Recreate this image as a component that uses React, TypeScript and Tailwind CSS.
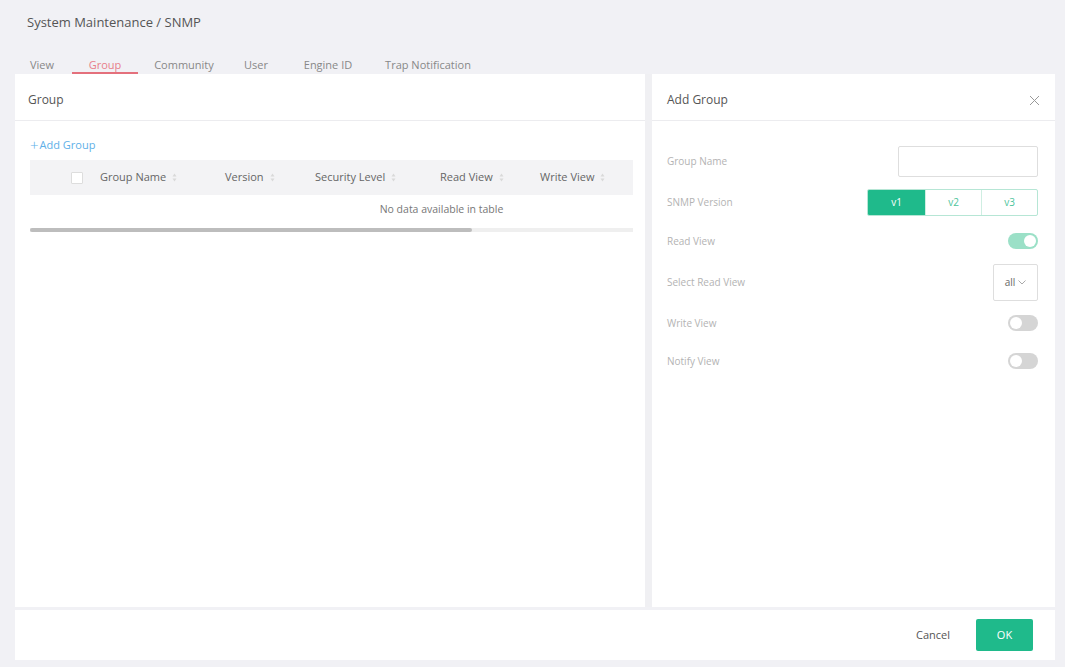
import React from "react";

const SortIcon = () => (
  <svg width="5" height="9" viewBox="0 0 5 9" className="ml-[6px]">
    <path d="M2.5 0.5 L4.5 3.5 L0.5 3.5 Z" fill="#d9d9d9" />
    <path d="M2.5 8.5 L4.5 5.5 L0.5 5.5 Z" fill="#d9d9d9" />
  </svg>
);

const Toggle = ({ on }: { on: boolean }) => (
  <div
    className={
      on
        ? "w-[30px] h-[16px] rounded-full bg-[#9be0c7] flex items-center justify-end pr-[2px]"
        : "w-[30px] h-[16px] rounded-full bg-[#d5d5d5] flex items-center justify-start pl-[2px]"
    }
  >
    <div className="w-[12px] h-[12px] rounded-full bg-white" />
  </div>
);

export default function App() {
  const tabs = [
    { t: "View", w: "w-[60px]" },
    { t: "Group", w: "w-[66px]", active: true },
    { t: "Community", w: "w-[92px]" },
    { t: "User", w: "w-[52px]" },
    { t: "Engine ID", w: "w-[92px]" },
    { t: "Trap Notification", w: "w-[108px]" },
  ];
  return (
    <div className="w-[1065px] h-[667px] bg-[#f1f1f5] flex flex-col font-['Open_Sans',sans-serif] overflow-hidden">
      {/* header */}
      <div className="h-[74px] flex flex-col pt-[13px]">
        <div className="pl-[27px] text-[13px] leading-[18px] text-[#555]">System Maintenance / SNMP</div>
        <div className="flex mt-[27px] ml-[12px]">
          {tabs.map((tab) => (
            <div
              key={tab.t}
              className={
                tab.w +
                " h-[16px] text-center text-[11px] leading-[14px] " +
                (tab.active ? "text-[#e8808a] border-b-2 border-[#e4707c]" : "text-[#888]")
              }
            >
              {tab.t}
            </div>
          ))}
        </div>
      </div>

      {/* main */}
      <div className="flex flex-col ml-[15px] mr-[10px]">
        <div className="h-[533px] flex">
          {/* left */}
          <div className="w-[630px] bg-white flex flex-col">
            <div className="h-[47px] border-b border-[#ececef] pl-[13px] pt-[18px] text-[12px] leading-[16px] text-[#555]">
              Group
            </div>
            <div className="pl-[15px] pr-[12px] pt-[17px]">
              <div className="flex items-center text-[11px] leading-[14px] text-[#5eb0e8]">
                <span className="text-[15px] leading-[14px] font-light mr-[1px]">+</span>
                <span>Add Group</span>
              </div>
              <div className="mt-[8px] overflow-hidden">
                <div className="w-[823px]">
                  <div className="h-[35px] bg-[#f3f3f5] flex items-center text-[11px] text-[#666]">
                    <div className="ml-[41px] w-[12px] h-[12px] border border-[#ddd] bg-white rounded-[1px]" />
                    <div className="ml-[17px] w-[125px] flex items-center">Group Name<SortIcon /></div>
                    <div className="w-[90px] flex items-center">Version<SortIcon /></div>
                    <div className="w-[125px] flex items-center">Security Level<SortIcon /></div>
                    <div className="w-[100px] flex items-center">Read View<SortIcon /></div>
                    <div className="w-[90px] flex items-center">Write View<SortIcon /></div>
                  </div>
                  <div className="h-[30px] flex items-center justify-center text-[10.5px] text-[#777]">
                    No data available in table
                  </div>
                </div>
                <div className="mt-[3px] h-[4px] bg-[#efefef] w-full">
                  <div className="h-[4px] w-[442px] bg-[#bdbdbd] rounded-[2px]" />
                </div>
              </div>
            </div>
          </div>

          {/* separator */}
          <div className="w-[7px] bg-[#f0f0f3]" />

          {/* right */}
          <div className="flex-1 bg-white flex flex-col">
            <div className="h-[47px] border-b border-[#ececef] pl-[15px] pr-[15px] flex items-start justify-between pt-[18px]">
              <span className="text-[12px] leading-[16px] text-[#555]">Add Group</span>
              <svg width="11" height="11" viewBox="0 0 11 11" className="mt-[3px]">
                <path d="M1 1 L10 10 M10 1 L1 10" stroke="#999" strokeWidth="1" />
              </svg>
            </div>
            <div className="pl-[15px] pr-[17px] pt-[25px] flex flex-col text-[10px] text-[#b3b3b3]">
              <div className="h-[31px] flex items-center justify-between">
                <span>Group Name</span>
                <div className="w-[140px] h-[31px] border border-[#dedede] rounded-[2px]" />
              </div>
              <div className="mt-[12px] h-[27px] flex items-center justify-between">
                <span>SNMP Version</span>
                <div className="flex h-[27px] border border-[#b6e6d5] rounded-[2px] overflow-hidden text-[10px]">
                  <div className="w-[57px] bg-[#1fba8b] text-white flex items-center justify-center">v1</div>
                  <div className="w-[56px] border-l border-[#cfeee2] text-[#4cc49b] flex items-center justify-center">v2</div>
                  <div className="w-[56px] border-l border-[#cfeee2] text-[#4cc49b] flex items-center justify-center">v3</div>
                </div>
              </div>
              <div className="mt-[15px] h-[20px] flex items-center justify-between">
                <span>Read View</span>
                <Toggle on />
              </div>
              <div className="mt-[13px] h-[37px] flex items-center justify-between">
                <span>Select Read View</span>
                <div className="w-[45px] h-[37px] border border-[#dedede] rounded-[2px] flex items-center justify-center gap-[3px] text-[10px] text-[#666]">
                  <span>all</span>
                  <svg width="8" height="5" viewBox="0 0 8 5">
                    <path d="M0.5 0.5 L4 4 L7.5 0.5" stroke="#aaa" fill="none" strokeWidth="1" />
                  </svg>
                </div>
              </div>
              <div className="mt-[12px] h-[20px] flex items-center justify-between">
                <span>Write View</span>
                <Toggle on={false} />
              </div>
              <div className="mt-[18px] h-[20px] flex items-center justify-between">
                <span>Notify View</span>
                <Toggle on={false} />
              </div>
            </div>
          </div>
        </div>

        {/* footer */}
        <div className="mt-[3px] h-[50px] bg-white flex items-center justify-end pr-[22px]">
          <span className="text-[11px] text-[#555] mr-[26px]">Cancel</span>
          <div className="w-[57px] h-[32px] bg-[#1fba8b] rounded-[2px] flex items-center justify-center text-[11px] text-white">
            OK
          </div>
        </div>
      </div>
    </div>
  );
}
